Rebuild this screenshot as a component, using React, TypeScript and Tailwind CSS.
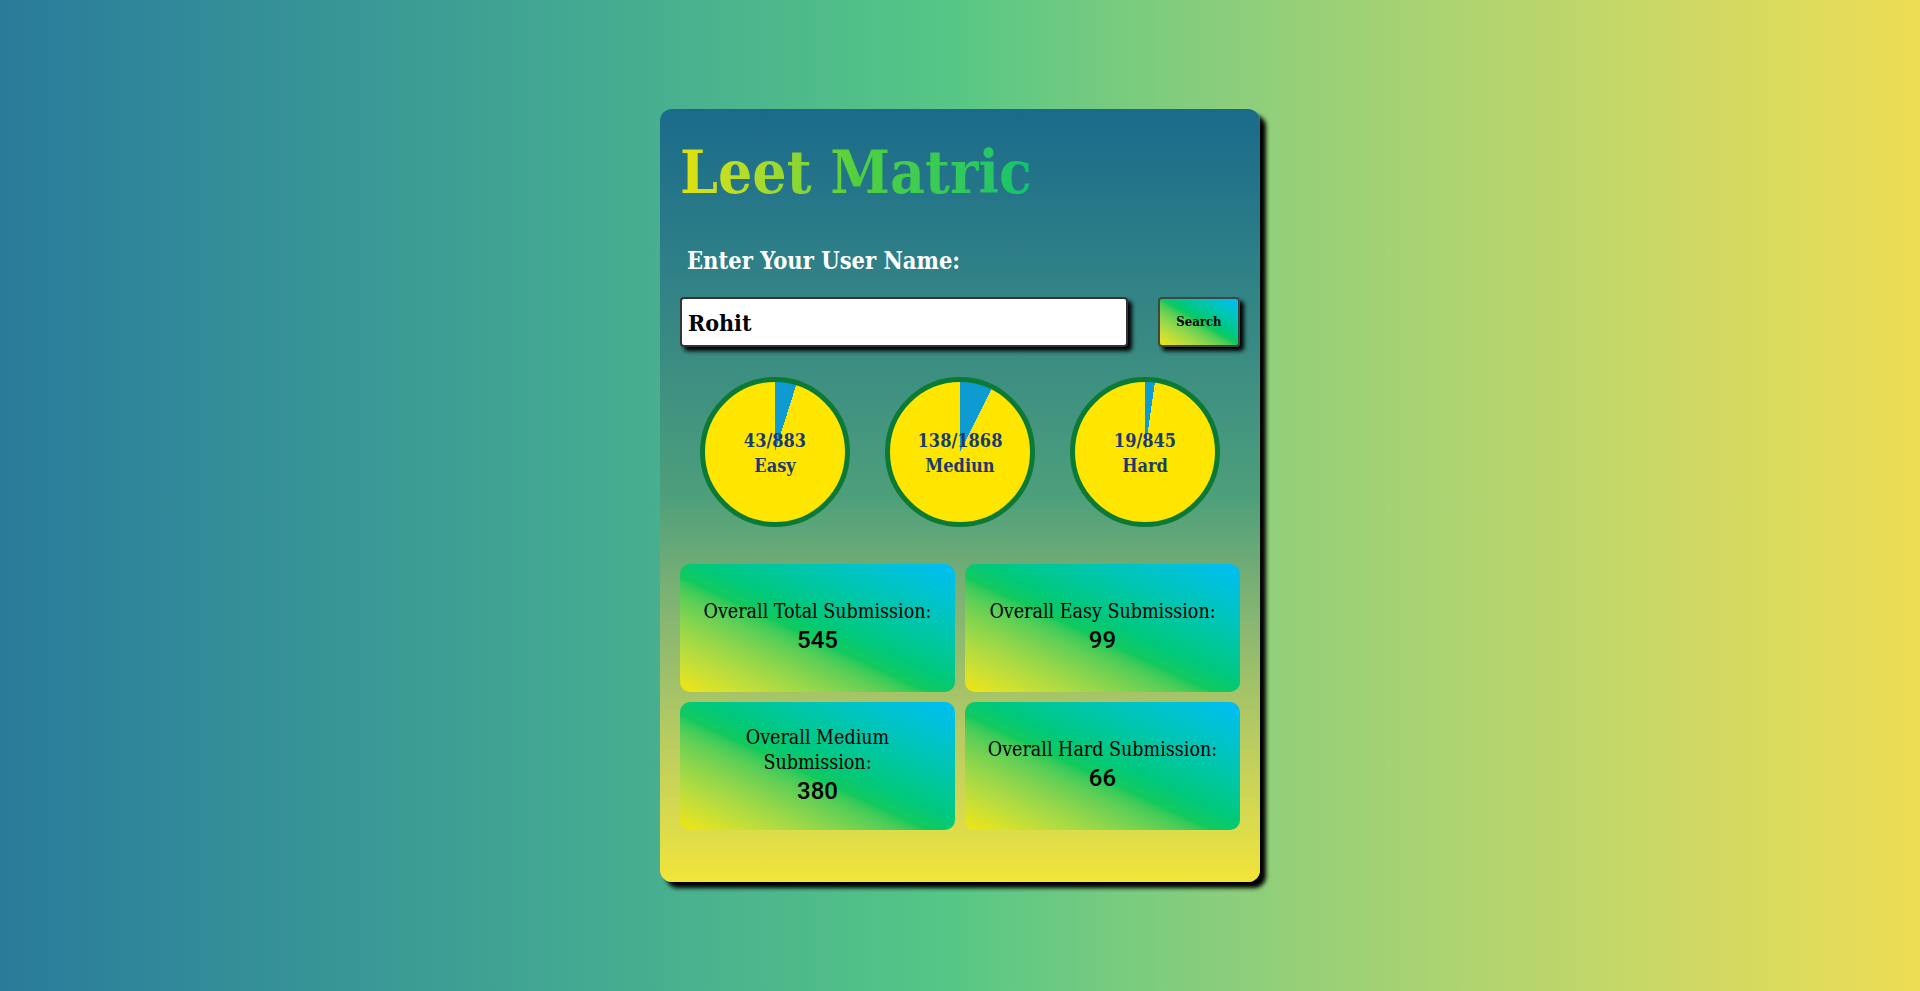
import React, { useState } from "react";

type Level = {
  name: string;
  solved: number;
  total: number;
};

const levels: Level[] = [
  { name: "Easy", solved: 43, total: 883 },
  { name: "Mediun", solved: 138, total: 1868 },
  { name: "Hard", solved: 19, total: 845 },
];

const stats = [
  { label: "Overall Total Submission:", value: 545 },
  { label: "Overall Easy Submission:", value: 99 },
  { label: "Overall Medium Submission:", value: 380 },
  { label: "Overall Hard Submission:", value: 66 },
];

const slab = "font-['DejaVu_Serif',serif] [font-stretch:condensed]";

const ProgressCircle = ({ level }: { level: Level }) => {
  const deg = (level.solved / level.total) * 360;
  return (
    <div
      className="w-[150px] h-[150px] rounded-full border-[5px] border-[#0b7a35] flex flex-col items-center justify-center pt-[2px]"
      style={{
        background: `conic-gradient(#0e9bd2 0deg ${deg}deg, #ffe600 ${deg}deg 360deg)`,
      }}
    >
      <span className={`${slab} text-[18px] leading-[25px] font-bold text-[#1b3a6d]`}>
        {level.solved}/{level.total}
      </span>
      <span className={`${slab} text-[18px] leading-[25px] font-bold text-[#1b3a6d]`}>
        {level.name}
      </span>
    </div>
  );
};

export default function App() {
  const [userName, setUserName] = useState("Rohit");

  return (
    <div className="min-h-screen w-full flex items-center justify-center bg-linear-to-r from-[#2a7b9b] via-[#57c785] to-[#eddd53]">
      <div className="w-[600px] rounded-[12px] bg-linear-to-b from-[#1a6a8b] via-[#4d9f7b] to-[#f2e537] shadow-[6px_6px_4px_#000] px-5 pt-[18px] pb-[52px]">
        {/* Title */}
        <h1
          className={`${slab} inline-block text-[60px] leading-[90px] font-bold bg-linear-to-r from-[#e2e20a] via-[#4fd03c] to-[#0cc46c] bg-clip-text text-transparent`}
        >
          Leet Matric
        </h1>

        {/* Search */}
        <p className={`${slab} mt-[29px] ml-[7px] text-[23.5px] leading-[30px] font-bold text-white`}>
          Enter Your User Name:
        </p>
        <div className="mt-[21px] flex items-center justify-between">
          <input
            value={userName}
            onChange={(e) => setUserName(e.target.value)}
            className={`${slab} w-[448px] h-[50px] bg-white border-2 border-[#333] rounded-[4px] px-[6px] text-[23px] font-bold text-black shadow-[4px_4px_4px_#000] outline-none`}
          />
          <button
            className={`${slab} w-[82px] h-[50px] border-2 border-[#444] rounded-[4px] bg-linear-to-tr from-[#f2e600] via-[#12c95c] to-[#00bdf7] text-[13px] font-bold text-black shadow-[4px_4px_4px_#000]`}
          >
            Search
          </button>
        </div>

        {/* Progress */}
        <div className="mt-[30px] flex justify-center gap-[35px]">
          {levels.map((level) => (
            <ProgressCircle key={level.name} level={level} />
          ))}
        </div>

        {/* Stat cards */}
        <div className="mt-[37px] grid grid-cols-2 gap-[10px]">
          {stats.map((s) => (
            <div
              key={s.label}
              className="h-[128px] rounded-[10px] bg-linear-to-tr from-[#f2e600] via-[#12c95c] via-45% to-[#00bdf7] flex flex-col items-center justify-center px-4 text-center"
            >
              <p className={`${slab} text-[19.5px] leading-[25px] text-black`}>
                {s.label}
              </p>
              <p className="font-['Roboto',sans-serif] text-[24px] leading-[33px] font-medium text-black">
                {s.value}
              </p>
            </div>
          ))}
        </div>
      </div>
    </div>
  );
}
